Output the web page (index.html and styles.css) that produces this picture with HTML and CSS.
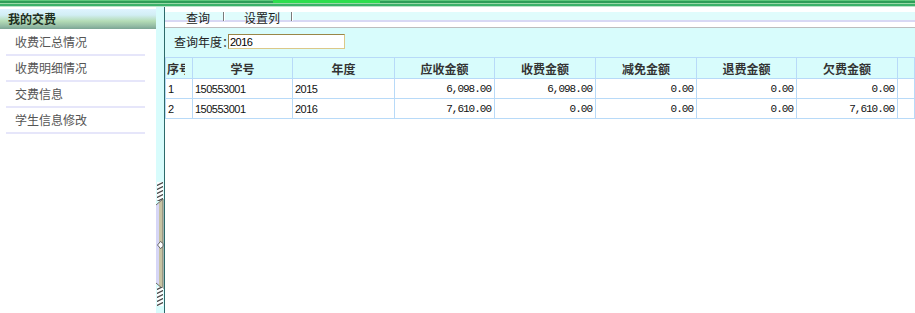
FILE: index.html
```html
<!DOCTYPE html>
<html lang="zh-CN">

<head>
    <meta charset="UTF-8">
    <meta name="viewport" content="width=device-width, initial-scale=1.0">
    <title>我的交费</title>
    <link rel="stylesheet" href="styles.css">
</head>

<body>
    <div class="topbar">
        <div class="tab"></div>
    </div>
    <div class="main">
        <div class="sidebar">
            <p class="side-title">我的交费</p>
            <ul class="menu">
                <li>收费汇总情况</li>
                <li>收费明细情况</li>
                <li>交费信息</li>
                <li>学生信息修改</li>
            </ul>
        </div>
        <div class="splitter">
            <svg class="handle" width="8" height="124" viewBox="0 0 8 124">
                <defs>
                    <pattern id="hatch" width="8" height="4" patternUnits="userSpaceOnUse">
                        <rect width="8" height="4" fill="#fff" />
                        <path d="M0 4 L8 0" stroke="#4a4a4a" stroke-width="1.3" />
                    </pattern>
                </defs>
                <rect x="1" y="0" width="6" height="19" fill="url(#hatch)" />
                <polygon points="0,23 7,17 7,107 0,101" fill="#d6d6f6" />
                <polygon points="3,20.5 7,17 7,107 3,103.5" fill="#c8c3a3" />
                <path d="M0 23 L7 17 M0 101 L7 107 M7 17 L7 107" stroke="#6e6e62" stroke-width="1" fill="none" />
                <rect x="1" y="105" width="6" height="19" fill="url(#hatch)" />
                <polygon points="1.5,63 4.5,59.5 7,61.5 7,64.5 4.5,66.5" fill="#fff" stroke="#444" stroke-width="0.8" />
            </svg>
        </div>
        <div class="content">
            <div class="toolbar">
                <span class="tool first">查询</span>
                <i class="sep"></i>
                <span class="tool second">设置列</span>
                <i class="sep last"></i>
            </div>
            <div class="search">
                <label>查询年度：</label>
                <input type="text" value="2016">
            </div>
            <table class="grid">
                <colgroup>
                    <col style="width:27px">
                    <col style="width:100px">
                    <col style="width:102px">
                    <col style="width:100px">
                    <col style="width:101px">
                    <col style="width:101px">
                    <col style="width:100px">
                    <col style="width:101px">
                    <col style="width:17px">
                </colgroup>
                <tr>
                    <th class="no"><span>序号</span></th>
                    <th>学号</th>
                    <th>年度</th>
                    <th>应收金额</th>
                    <th>收费金额</th>
                    <th>减免金额</th>
                    <th>退费金额</th>
                    <th>欠费金额</th>
                    <th></th>
                </tr>
                <tr>
                    <td>1</td>
                    <td>150553001</td>
                    <td>2015</td>
                    <td class="money">6,098.00</td>
                    <td class="money">6,098.00</td>
                    <td class="money">0.00</td>
                    <td class="money">0.00</td>
                    <td class="money">0.00</td>
                    <td></td>
                </tr>
                <tr>
                    <td>2</td>
                    <td>150553001</td>
                    <td>2016</td>
                    <td class="money">7,610.00</td>
                    <td class="money">0.00</td>
                    <td class="money">0.00</td>
                    <td class="money">0.00</td>
                    <td class="money">7,610.00</td>
                    <td></td>
                </tr>
            </table>
        </div>
    </div>
</body>

</html>
```

FILE: styles.css
```css
* {
    margin: 0;
    padding: 0;
}

body {
    width: 915px;
    height: 313px;
    overflow: hidden;
    background: #fff;
    font-family: "Noto Sans CJK SC", "Liberation Sans", sans-serif;
    font-size: 12px;
}

.topbar {
    height: 7px;
    padding-left: 273px;
    background: linear-gradient(to bottom,
            #5ec87c 0, #5ec87c 1px,
            #2e9e58 1px, #2e9e58 3px,
            #9ad8a8 3px, #9ad8a8 4px,
            #3cb26a 4px, #3cb26a 6px,
            #b8e4c8 6px, #b8e4c8 7px);
}

.topbar .tab {
    width: 107px;
    height: 3px;
    background: #2ede4e;
}

.main {
    display: flex;
    height: 306px;
}

/* 左侧菜单 */
.sidebar {
    width: 157px;
    padding-top: 2px;
    background: #fff;
}

.side-title {
    height: 20px;
    line-height: 20px;
    padding-left: 8px;
    font-weight: bold;
    color: #1e2e22;
    background: linear-gradient(to bottom, #dff4ff 0, #d2eef4 30%, #b4dcb6 60%, #94bca4 85%, #7aa494 100%);
}

.menu {
    list-style: none;
    margin: 1px 11px 0 6px;
}

.menu li {
    height: 24px;
    line-height: 24px;
    padding-left: 9px;
    color: #555;
    border-bottom: 2px solid #e6e6fa;
}

/* 分隔条 */
.splitter {
    width: 8px;
    padding-top: 175px;
    background: #d8fcfc;
    border-right: 1px solid #2c6a6a;
}

.handle {
    display: block;
}

/* 右侧内容 */
.content {
    flex: 1;
    padding-top: 1px;
    background: #fff;
}

.toolbar {
    display: flex;
    align-items: center;
    height: 19px;
    border-bottom: 1px solid #bdbdbd;
    background: linear-gradient(to bottom,
            #fff 0, #fff 4px,
            #e0fcfc 4px, #e0fcfc 12px,
            #d8d8f4 12px, #d8d8f4 14px,
            #fff 14px);
}

.tool {
    color: #222;
    line-height: 19px;
}

.tool.first {
    margin-left: 21px;
}

.tool.second {
    margin-left: 19px;
}

.sep {
    width: 1px;
    height: 9px;
    margin-left: 13px;
    margin-top: -2px;
    background: #7a7a7a;
    border-right: 1px solid #fff;
}

.sep.last {
    margin-left: 11px;
}

.search {
    display: flex;
    height: 29px;
    padding: 6px 0 0 9px;
    box-sizing: border-box;
    background: #d8fcfc;
}

.search label {
    width: 54px;
    line-height: 15px;
    white-space: nowrap;
    color: #222;
}

.search input {
    width: 117px;
    height: 15px;
    box-sizing: border-box;
    padding-left: 1px;
    border: 1px solid;
    border-color: #9a8648 #dcc888 #dcc888 #9a8648;
    outline: none;
    background: #fff;
    font-family: "Liberation Sans", sans-serif;
    font-size: 11px;
    letter-spacing: -0.5px;
    color: #000;
}

/* 数据表格 */
.grid {
    width: 749px;
    table-layout: fixed;
    border-collapse: collapse;
}

.grid th,
.grid td {
    border: 1px solid #b8daf8;
    overflow: hidden;
    white-space: nowrap;
}

.grid th {
    height: 20px;
    padding: 0 3px;
    background: #d8fcfc;
    font-weight: bold;
    color: #333;
    text-align: center;
}

.grid th.no {
    padding: 0 0 0 1px;
    text-align: left;
}

.grid th.no span {
    display: block;
    width: 18px;
    overflow: hidden;
}

.grid td {
    height: 19px;
    padding: 0 2px;
    background: #fff;
    font-family: "Liberation Sans", sans-serif;
    font-size: 11px;
    letter-spacing: -0.5px;
    color: #111;
}

.grid td.money {
    padding-right: 3px;
    text-align: right;
    font-family: "Liberation Mono", monospace;
    font-size: 11px;
    letter-spacing: -1px;
}
```
